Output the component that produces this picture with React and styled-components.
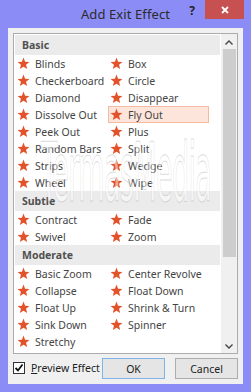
import React from 'react'
import styled, { createGlobalStyle } from 'styled-components'

const Global = createGlobalStyle`
  html, body { margin: 0; padding: 0; background: #8b8cf5; }
  * { box-sizing: border-box; }
`

const Window = styled.div`
  width: 251px;
  height: 392px;
  background: #8b8cf5;
  display: flex;
  flex-direction: column;
  font-family: "Noto Sans", "Open Sans", sans-serif;
  overflow: hidden;
`
const TitleBar = styled.div`
  height: 28px;
  display: grid;
  grid-template-columns: 1fr auto 1fr;
  align-items: start;
`
const Title = styled.div`
  font-size: 13px;
  color: #2b2b2b;
  padding-top: 5px;
  letter-spacing: 0.1px;
`
const Controls = styled.div`
  display: flex;
  justify-content: flex-end;
  align-items: flex-start;
  padding-right: 7px;
`
const Help = styled.div`
  font-size: 12px;
  font-weight: 700;
  color: #222;
  width: 22px;
  padding-top: 2px;
  text-align: center;
  margin-right: 2px;
`
const Close = styled.div`
  width: 39px;
  height: 19px;
  background: #c75050;
  display: flex;
  align-items: center;
  justify-content: center;
`
const Body = styled.div`
  flex: 1;
  margin: 0 8px 8px;
  background: #f0f0f0;
  padding: 5px 5px 0;
  display: flex;
  flex-direction: column;
`
const ListBox = styled.div`
  position: relative;
  height: 321px;
  border: 1px solid #acacac;
  background: #fff;
  display: flex;
  overflow: hidden;
`
const ListContent = styled.div`
  flex: 1;
  padding: 1px 1px 0;
`
const Header = styled.div`
  height: 20px;
  background: #ebebeb;
  color: #505050;
  font-weight: 700;
  font-size: 10.5px;
  display: flex;
  align-items: center;
  padding-left: 7px;
`
const Grid = styled.div`
  display: grid;
  grid-template-columns: 93px 101px;
`
const Item = styled.div`
  height: 17px;
  display: flex;
  align-items: center;
  gap: 5px;
  padding-left: 1px;
  font-size: 10.5px;
  color: #444;
  white-space: nowrap;
  border: 1px solid ${p => (p.$selected ? '#f5b9a4' : 'transparent')};
  background: ${p => (p.$selected ? '#fde5dc' : 'transparent')};
`
const ScrollBar = styled.div`
  width: 16px;
  background: #f0f0f0;
  display: flex;
  flex-direction: column;
  align-items: center;
`
const Arrow = styled.div`
  height: 14px;
  display: flex;
  align-items: center;
  justify-content: center;
  padding-top: ${p => (p.$down ? '0' : '2px')};
`
const Thumb = styled.div`
  width: 13px;
  height: 208px;
  background: #cdcdcd;
  margin-top: 1px;
`
const Spacer = styled.div`
  flex: 1;
`
const Watermark = styled.div`
  position: absolute;
  left: 27px;
  top: 98px;
  font-family: "DejaVu Sans", sans-serif;
  font-size: 82px;
  line-height: 1;
  letter-spacing: -2px;
  color: rgba(255, 255, 255, 0.5);
  -webkit-text-stroke: 1px rgba(160, 160, 160, 0.4);
  transform: scaleX(0.33);
  transform-origin: left top;
  pointer-events: none;
  white-space: nowrap;
`
const Footer = styled.div`
  display: flex;
  align-items: center;
  margin-top: 4px;
  height: 21px;
`
const Check = styled.div`
  width: 12px;
  height: 12px;
  border: 1px solid #333;
  background: #fff;
  display: flex;
  align-items: center;
  justify-content: center;
  margin-right: 6px;
  margin-top: -2px;
`
const Label = styled.div`
  font-size: 10.5px;
  color: #222;
  flex: 1;
  margin-top: -2px;
  u { text-decoration: underline; }
`
const Button = styled.div`
  width: 63px;
  height: 21px;
  border: 1px solid ${p => (p.$primary ? '#7eb4ea' : '#adadad')};
  background: #e5e5e5;
  font-size: 10.5px;
  color: #222;
  display: flex;
  align-items: center;
  justify-content: center;
  margin-left: ${p => (p.$primary ? '0' : '10px')};
`

const Star = () => (
  <svg width="13" height="13" viewBox="0 0 24 24">
    <polygon
      points="12,1 14.9,8.6 23,9.1 16.7,14.3 18.8,22.2 12,17.8 5.2,22.2 7.3,14.3 1,9.1 9.1,8.6"
      fill="#e2532b"
    />
  </svg>
)

const sections = [
  {
    name: 'Basic',
    items: ['Blinds', 'Box', 'Checkerboard', 'Circle', 'Diamond', 'Disappear', 'Dissolve Out', 'Fly Out', 'Peek Out', 'Plus', 'Random Bars', 'Split', 'Strips', 'Wedge', 'Wheel', 'Wipe'],
  },
  { name: 'Subtle', items: ['Contract', 'Fade', 'Swivel', 'Zoom'] },
  {
    name: 'Moderate',
    items: ['Basic Zoom', 'Center Revolve', 'Collapse', 'Float Down', 'Float Up', 'Shrink & Turn', 'Sink Down', 'Spinner', 'Stretchy'],
  },
]

export default function App() {
  return (
    <Window>
      <Global />
      <TitleBar>
        <div />
        <Title>Add Exit Effect</Title>
        <Controls>
          <Help>?</Help>
          <Close>
            <svg width="8" height="8" viewBox="0 0 8 8">
              <path d="M1 1L7 7M7 1L1 7" stroke="#fff" strokeWidth="1.8" />
            </svg>
          </Close>
        </Controls>
      </TitleBar>
      <Body>
        <ListBox>
          <ListContent>
            {sections.map(s => (
              <div key={s.name}>
                <Header>{s.name}</Header>
                <Grid>
                  {s.items.map(it => (
                    <Item key={it} $selected={it === 'Fly Out'}>
                      <Star />
                      {it}
                    </Item>
                  ))}
                </Grid>
              </div>
            ))}
          </ListContent>
          <ScrollBar>
            <Arrow>
              <svg width="8" height="5" viewBox="0 0 8 5">
                <path d="M0.5 4.5L4 1L7.5 4.5" stroke="#444" strokeWidth="1.4" fill="none" />
              </svg>
            </Arrow>
            <Thumb />
            <Spacer />
            <Arrow $down>
              <svg width="8" height="5" viewBox="0 0 8 5">
                <path d="M0.5 0.5L4 4L7.5 0.5" stroke="#444" strokeWidth="1.4" fill="none" />
              </svg>
            </Arrow>
          </ScrollBar>
          <Watermark>TermasMedia</Watermark>
        </ListBox>
        <Footer>
          <Check>
            <svg width="10" height="10" viewBox="0 0 10 10">
              <path d="M1.5 5L4 7.5L8.5 1.5" stroke="#111" strokeWidth="1.8" fill="none" />
            </svg>
          </Check>
          <Label><u>P</u>review Effect</Label>
          <Button $primary>OK</Button>
          <Button>Cancel</Button>
        </Footer>
      </Body>
    </Window>
  )
}
